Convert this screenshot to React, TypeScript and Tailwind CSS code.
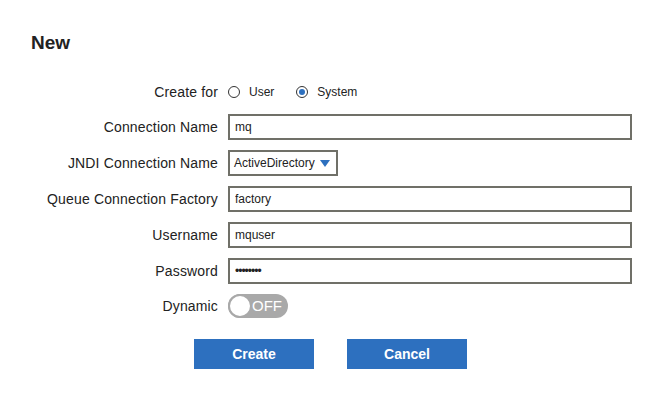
import React, { useState } from 'react';

const font = { fontFamily: '"Liberation Sans", Arial, sans-serif' };

const Row: React.FC<{ label: string; children: React.ReactNode; h?: string }> = ({ label, children, h = 'h-[26px]' }) => (
  <div className={`grid grid-cols-[187px_1fr] gap-x-[10px] items-center ${h}`}>
    <div className="text-right text-[14px] tracking-[0.15px] text-[#222]">{label}</div>
    <div className="flex items-center h-full">{children}</div>
  </div>
);

const Radio: React.FC<{ checked: boolean; label: string; onClick: () => void }> = ({ checked, label, onClick }) => (
  <button type="button" onClick={onClick} className="flex items-center gap-[9px] text-[12px] text-[#222]">
    <span className="w-[12px] h-[12px] rounded-full border border-[#333] flex items-center justify-center bg-white">
      {checked && <span className="w-[6px] h-[6px] rounded-full bg-[#2d70bf]" />}
    </span>
    {label}
  </button>
);

export default function App() {
  const [target, setTarget] = useState<'user' | 'system'>('system');
  const [dynamic, setDynamic] = useState(false);

  const inputCls =
    'w-full h-[26px] border-2 border-[#707068] px-[5px] text-[12px] text-[#222] outline-none bg-white';

  return (
    <div className="w-[659px] h-[398px] bg-white pt-[31px] px-[31px]" style={font}>
      <h1 className="text-[19px] leading-[23px] font-bold text-[#222]">New</h1>

      <div className="mt-[26px] flex flex-col gap-[10px] w-[601px]">
        <Row label="Create for" h="h-[24px]">
          <div className="flex items-center gap-[22px]">
            <Radio checked={target === 'user'} label="User" onClick={() => setTarget('user')} />
            <Radio checked={target === 'system'} label="System" onClick={() => setTarget('system')} />
          </div>
        </Row>
        <Row label="Connection Name">
          <input className={inputCls} defaultValue="mq" />
        </Row>
        <Row label="JNDI Connection Name">
          <div className="w-[110px] h-[26px] border-2 border-[#707068] pl-[4px] pr-[6px] flex items-center justify-between text-[12px] text-[#222]">
            <span>ActiveDirectory</span>
            <svg width="10" height="7" viewBox="0 0 10 7">
              <path d="M0 0 L10 0 L5 7 Z" fill="#2d70bf" />
            </svg>
          </div>
        </Row>
        <Row label="Queue Connection Factory">
          <input className={inputCls} defaultValue="factory" />
        </Row>
        <Row label="Username">
          <input className={inputCls} defaultValue="mquser" />
        </Row>
        <Row label="Password">
          <input type="password" className={`${inputCls} tracking-[-1px]`} defaultValue="password" />
        </Row>
        <Row label="Dynamic" h="h-[24px]">
          <button
            type="button"
            onClick={() => setDynamic(!dynamic)}
            className={`relative w-[60px] h-[24px] rounded-full flex items-center ${dynamic ? 'bg-[#2d70bf]' : 'bg-[#a9a9a9]'}`}
          >
            <span
              className={`absolute top-0 w-[24px] h-[24px] rounded-full bg-white border-2 border-[#a9a9a9] ${dynamic ? 'right-0' : 'left-0'}`}
            />
            <span className={`absolute text-[15px] text-white ${dynamic ? 'left-[8px]' : 'left-[24px]'}`}>
              {dynamic ? 'ON' : 'OFF'}
            </span>
          </button>
        </Row>
      </div>

      <div className="mt-[21px] flex justify-center gap-[33px] -ml-[31px] pl-[2px] w-[659px]">
        <button type="button" className="w-[120px] h-[30px] bg-[#2d70bf] text-white text-[14px] font-bold">
          Create
        </button>
        <button type="button" className="w-[120px] h-[30px] bg-[#2d70bf] text-white text-[14px] font-bold">
          Cancel
        </button>
      </div>
    </div>
  );
}
